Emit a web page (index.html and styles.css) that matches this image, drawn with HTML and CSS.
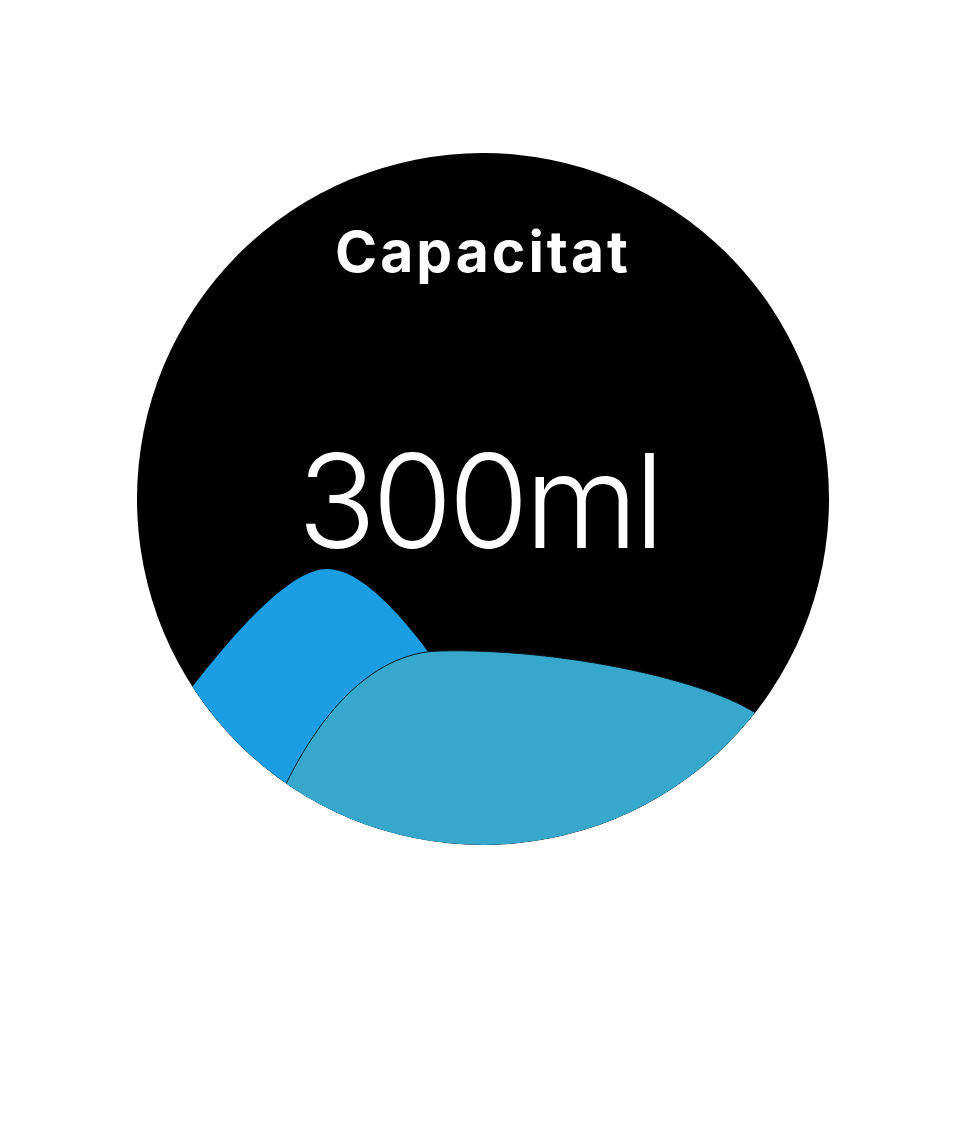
FILE: index.html
```html
<!DOCTYPE html>
<html>
<head>
<meta charset="utf-8">
<link rel="stylesheet" href="styles.css">
</head>
<body>
<main class="page">
  <section class="dial">
    <svg class="waves" viewBox="137 153 692 692" xmlns="http://www.w3.org/2000/svg">
      <defs>
        <clipPath id="c"><circle cx="483" cy="499" r="346"/></clipPath>
      </defs>
      <g clip-path="url(#c)">
        <path class="wave-back" d="M 110 800 C 195 678, 278 569, 327 569 C 360 569, 400 612, 440 668 L 440 900 L 100 900 Z"/>
        <path class="wave-front" d="M 270 820 C 310 720, 370 652, 440 651 C 560 648, 710 680, 760 716 L 900 900 L 200 900 Z"/>
      </g>
    </svg>
    <h1 class="title">Capacitat</h1>
    <div class="value">300ml</div>
  </section>
</main>
</body>
</html>
```

FILE: styles.css
```css
html, body {
  margin: 0;
  padding: 0;
  background: #ffffff;
}
.page {
  display: flex;
  justify-content: center;
  padding-top: 153px;
  padding-right: 1px;
}
.dial {
  position: relative;
  width: 692px;
  height: 692px;
  border-radius: 50%;
  background: #000000;
  overflow: hidden;
  display: flex;
  flex-direction: column;
  align-items: center;
  padding-top: 70px;
  box-sizing: border-box;
}
.waves {
  position: absolute;
  left: 0;
  top: 0;
  width: 692px;
  height: 692px;
}
.wave-back {
  fill: #1b9de3;
}
.wave-front {
  fill: #37a8cc;
  stroke: #0a1a24;
  stroke-width: 1;
}
.title {
  position: relative;
  margin: 0;
  font-family: "Inter", "Lato", sans-serif;
  font-weight: 700;
  font-size: 57px;
  line-height: 1;
  letter-spacing: 3px;
  color: #ffffff;
}
.value {
  position: relative;
  margin-top: 156px;
  margin-right: 8px;
  font-family: "Inter", sans-serif;
  font-weight: 300;
  font-size: 130px;
  line-height: 1;
  letter-spacing: -4px;
  color: #ffffff;
}
```
